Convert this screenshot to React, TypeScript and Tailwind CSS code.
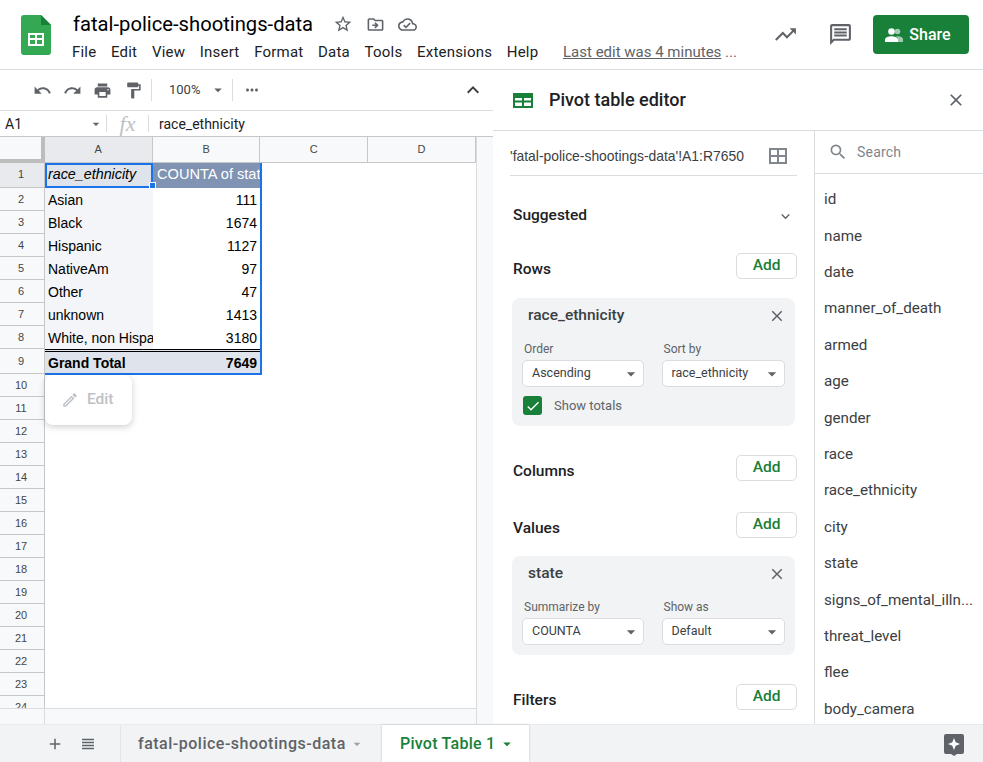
import { MdUndo, MdRedo, MdPrint, MdFormatPaint, MdMoreHoriz, MdKeyboardArrowUp, MdStarBorder, MdOutlineDriveFileMove, MdOutlineCloudDone, MdTrendingUp, MdOutlineMessage, MdClose, MdSearch, MdArrowDropDown, MdCheck, MdAdd, MdViewHeadline, MdKeyboardArrowDown, MdOutlineEdit } from "react-icons/md";

const sans = "font-['Roboto',sans-serif]";
const arial = "font-['Liberation_Sans',sans-serif]";

const menus = ["File", "Edit", "View", "Insert", "Format", "Data", "Tools", "Extensions", "Help"];
const rowNums = Array.from({ length: 24 }, (_, i) => i + 1);
const fields = ["id", "name", "date", "manner_of_death", "armed", "age", "gender", "race", "race_ethnicity", "city", "state", "signs_of_mental_illn...", "threat_level", "flee", "body_camera"];
const data = [
    ["Asian", "111"],
    ["Black", "1674"],
    ["Hispanic", "1127"],
    ["NativeAm", "97"],
    ["Other", "47"],
    ["unknown", "1413"],
    ["White, non Hispanic", "3180"],
];

function rowHeight(n: number) {
    if (n === 1) return "h-[25px] pb-[2px]";
    if (n === 9) return "h-[25px]";
    return "h-[23px]";
}

function SheetsLogo() {
    return (
        <svg width="30" height="40" viewBox="0 0 30 40">
            <path d="M3 0h17l10 10v27a3 3 0 0 1-3 3H3a3 3 0 0 1-3-3V3a3 3 0 0 1 3-3z" fill="#34a853" />
            <path d="M20 0l10 10H20z" fill="#188038" />
            <path d="M7 18h16v13H7z M9 20v3h5v-3z M16 20v3h5v-3z M9 25v4h5v-4z M16 25v4h5v-4z" fill="#fff" fillRule="evenodd" />
        </svg>
    );
}

function PivotIcon() {
    return (
        <svg width="20" height="15" viewBox="0 0 20 15">
            <path d="M0 0h20v15H0z M2 5v2.500h7V5z M11 5v2.500h7V5z M2 9.500V13h7V9.500z M11 9.500V13h7V9.500z" fill="#188038" fillRule="evenodd" />
        </svg>
    );
}

function RangeIcon() {
    return (
        <svg width="18" height="16" viewBox="0 0 18 16">
            <path d="M0 0h18v16H0z M2 2v5h6V2z M10 2v5h6V2z M2 9v5h6V9z M10 9v5h6V9z" fill="#80868b" fillRule="evenodd" />
        </svg>
    );
}

function ExploreIcon() {
    return (
        <svg width="20" height="22" viewBox="0 0 20 22">
            <path d="M2 0h16a2 2 0 0 1 2 2v16a2 2 0 0 1-2 2h-5l-3 2-3-2H2a2 2 0 0 1-2-2V2a2 2 0 0 1 2-2z" fill="#5f6368" />
            <path d="M10 4l1.700 4.300L16 10l-4.300 1.700L10 16l-1.700-4.300L4 10l4.300-1.700z" fill="#fff" />
        </svg>
    );
}

function ShareIcon() {
    return (
        <svg width="18" height="14" viewBox="0 0 18 14">
            <circle cx="12.500" cy="3.500" r="2.800" fill="#fff" fillOpacity="0.6" />
            <path d="M11 8.500c3-.6 7 .6 7 2.700V14h-5v-3c0-1-.7-1.900-2-2.500z" fill="#fff" fillOpacity="0.6" />
            <circle cx="6.500" cy="3.500" r="3.300" fill="#fff" />
            <path d="M0 11.500C0 9.300 4 8.300 6.500 8.300S13 9.300 13 11.500V14H0z" fill="#fff" />
        </svg>
    );
}

function AddRow({ label, className }: { label: string; className: string }) {
    return (
        <div className={`flex items-center justify-between h-[26px] pl-[20px] pr-[17px] ${className}`}>
            <span className={`${sans} pt-[7px] text-[15.5px] font-medium text-[#202124]`}>{label}</span>
            <button className={`${sans} w-[61px] h-[26px] rounded-[5px] border border-[#dadce0] bg-white text-[15.5px] font-medium text-[#188038]`}>Add</button>
        </div>
    );
}

function Select({ label, value, width }: { label: string; value: string; width: string }) {
    return (
        <div className={width}>
            <div className={`${sans} text-xs text-[#5f6368] pl-[2px] mb-[3px]`}>{label}</div>
            <div className="h-[27px] flex items-center justify-between rounded-[5px] border border-[#dadce0] bg-white pl-[9px] pr-[2px]">
                <span className={`${sans} text-[12.5px] text-[#3c4043]`}>{value}</span>
                <MdArrowDropDown className="text-[20px] text-[#5f6368]" />
            </div>
        </div>
    );
}

function FieldCard({ title, children, className }: { title: string; children: React.ReactNode; className: string }) {
    return (
        <div className={`mx-[19px] w-[283px] rounded-lg bg-[#f1f3f4] px-[10px] ${className}`}>
            <div className="flex items-center justify-between pl-[6px] h-[36px] mb-[7px]">
                <span className={`${sans} text-[15.5px] font-medium text-[#3c4043]`}>{title}</span>
                <MdClose className="text-[18px] text-[#5f6368] -mr-[1px]" />
            </div>
            {children}
        </div>
    );
}

function Grid() {
    return (
        <div className="relative flex-1 min-h-0 overflow-hidden flex flex-col">
            <div className={`${arial} flex h-[26px] shrink-0 border-b border-[#c7c7c7] text-[11px] text-[#444746]`}>
                <div className="w-[45px] -mb-px bg-[#f8f9fa] border-r-4 border-b-4 border-[#bdbdbd]"></div>
                <div className="w-[108px] bg-[#e8eaed] border-r border-[#c7c7c7] flex items-center justify-center">A</div>
                <div className="w-[108px] bg-[#f8f9fa] border-r border-[#c7c7c7] flex items-center justify-center">B</div>
                <div className="w-[108px] bg-[#f8f9fa] border-r border-[#c7c7c7] flex items-center justify-center">C</div>
                <div className="w-[108px] bg-[#f8f9fa] border-r border-[#c7c7c7] flex items-center justify-center">D</div>
            </div>
            <div className="flex flex-1 min-h-0">
                <div className="w-[45px] shrink-0 bg-[#f8f9fa] border-r border-[#c7c7c7]">
                    {rowNums.map((n) => (
                        <div key={n} className={`${arial} ${rowHeight(n)} ${n === 1 ? "bg-[#e8eaed]" : ""} pr-[2px] flex items-center justify-center border-b border-[#c7c7c7] text-[11px] text-[#444746]`}>{n}</div>
                    ))}
                </div>
                <div className={`${arial} w-[216px] shrink-0 text-sm text-black`}>
                    <div className="flex h-[25px]">
                        <div className="w-[108px] bg-[#dfe4ec] italic text-[14.3px] pl-[3px] pb-[3px] flex items-center">race_ethnicity</div>
                        <div className="w-[107px] bg-[#8093b3] text-white text-[14.6px] pl-[4px] pb-[3px] flex items-center overflow-hidden whitespace-nowrap">COUNTA of state</div>
                    </div>
                    {data.map(([name, value]) => (
                        <div key={name} className="flex h-[23px]">
                            <div className="w-[108px] bg-[#f3f5f8] pl-[3px] flex items-center overflow-hidden whitespace-nowrap">{name}</div>
                            <div className="w-[108px] pr-[4px] flex items-center justify-end">{value}</div>
                        </div>
                    ))}
                    <div className="flex h-[25px] font-bold bg-[#dfe4ec] border-t-[3px] border-double border-black">
                        <div className="w-[108px] pl-[3px] flex items-center">Grand Total</div>
                        <div className="w-[108px] pr-[4px] flex items-center justify-end">7649</div>
                    </div>
                </div>
                <div className="flex-1"></div>
            </div>
            {/* selection */}
            <div className="absolute left-[45px] top-[26px] w-[217px] h-[212px] border-r-2 border-b-2 border-[#1a73e8] pointer-events-none"></div>
            <div className="absolute left-[45px] top-[26px] w-[108px] h-[25px] border-2 border-[#1a73e8] pointer-events-none"></div>
            <div className="absolute left-[149px] top-[45px] w-[7px] h-[7px] bg-[#1a73e8] border border-white"></div>
            {/* edit chip */}
            <div className="absolute left-[45px] top-[238px] w-[87px] h-[50px] bg-white rounded-lg shadow-[0_2px_6px_rgba(60,64,67,0.25)] flex items-center pl-[16px] gap-[8px]">
                <MdOutlineEdit className="text-[18px] text-[#bdc1c6]" />
                <span className={`${sans} text-[15.5px] font-medium text-[#bdc1c6]`}>Edit</span>
            </div>
        </div>
    );
}

export default function App() {
    return (
        <div className={`${sans} w-[983px] h-[762px] overflow-hidden bg-white flex flex-col`}>
            <div className="h-[70px] shrink-0 border-b border-[#dadce0] flex relative">
                <div className="w-[72px] pl-[21px] pt-[15px]"><SheetsLogo /></div>
                <div className="flex-1 pt-[11px]">
                    <div className="flex items-center h-[26px]">
                        <span className="pl-[1px] text-[20.2px] text-black">fatal-police-shootings-data</span>
                        <MdStarBorder className="ml-[20px] text-[20px] text-[#5f6368]" />
                        <MdOutlineDriveFileMove className="ml-[13px] text-[19px] text-[#5f6368]" />
                        <MdOutlineCloudDone className="ml-[13px] text-[19px] text-[#5f6368]" />
                    </div>
                    <div className="flex items-center gap-[14.7px] mt-[3px] h-[24px] text-[15px] tracking-[0.2px] text-[#202124]">
                        {menus.map((m) => <span key={m}>{m}</span>)}
                        <span className="ml-[10px] tracking-normal text-[#5f6368]"><span className="underline">Last edit was 4 minutes</span> ...</span>
                    </div>
                </div>
                <div className="flex items-center">
                    <MdTrendingUp className="text-[25px] text-[#5f6368] mr-[30px]" />
                    <MdOutlineMessage className="text-[25px] text-[#5f6368] mr-[20px]" />
                    <button className="w-[96px] h-[39px] mr-[14px] pr-[6px] rounded-[4px] bg-[#188038] text-white text-base font-medium flex items-center justify-center gap-[6px]">
                        <ShareIcon />Share
                    </button>
                </div>
            </div>
            <div className="flex-1 min-h-0 flex">
                <div className="w-[493px] shrink-0 flex flex-col bg-white">
                    <div className="h-[41px] shrink-0 border-b border-[#dadce0] pr-[16px] flex items-center text-[#5f6368]">
                        <MdUndo className="ml-[33px] text-[19px]" />
                        <MdRedo className="ml-[11px] text-[19px]" />
                        <MdPrint className="ml-[11px] text-[19px]" />
                        <MdFormatPaint className="ml-[12px] text-[19px]" />
                        <div className="ml-[8px] w-px h-[22px] bg-[#dadce0]"></div>
                        <span className="ml-[17px] text-[13px] text-[#3c4043]">100%</span>
                        <MdArrowDropDown className="ml-[9px] text-[18px]" />
                        <div className="ml-[5px] w-px h-[22px] bg-[#dadce0]"></div>
                        <MdMoreHoriz className="ml-[10px] text-[18px]" />
                        <MdKeyboardArrowUp className="ml-auto mr-[-8px] text-[24px] text-[#3c4043]" />
                    </div>
                    <div className="h-[26px] shrink-0 border-b border-[#c7c7c7] pr-[16px] flex items-center">
                        <span className="w-[88px] pl-[5px] text-sm text-[#202124]">A1</span>
                        <MdArrowDropDown className="w-[16px] text-[18px] text-[#5f6368]" />
                        <div className="ml-[2px] w-px h-[17px] bg-[#dadce0]"></div>
                        <span className="w-[41px] text-center font-['Liberation_Serif',serif] italic text-[22px] leading-none text-[#bdc1c6]">fx</span>
                        <div className="w-px h-[17px] bg-[#dadce0]"></div>
                        <span className="ml-[10px] text-sm text-[#202124]">race_ethnicity</span>
                    </div>
                    <div className="flex-1 min-h-0 flex">
                        <div className="w-[477px] shrink-0 flex flex-col border-r border-[#dadce0]">
                            <Grid />
                            <div className="h-[16px] shrink-0 bg-[#f8f9fa] border-t border-[#dadce0] flex">
                                <div className="w-[45px] border-r border-[#dadce0]"></div>
                            </div>
                        </div>
                        <div className="flex-1 bg-[#f8f9fa]"></div>
                    </div>
                </div>
                <div className="flex-1 flex flex-col bg-white">
                    <div className="h-[61px] shrink-0 border-b border-[#dadce0] flex items-center pl-[20px] pr-[17px]">
                        <PivotIcon />
                        <span className="ml-[16px] text-lg font-medium text-[#202124]">Pivot table editor</span>
                        <MdClose className="ml-auto text-[20px] text-[#5f6368]" />
                    </div>
                    <div className="flex-1 min-h-0 flex">
                        <div className="w-[322px] shrink-0 border-r border-[#dadce0] overflow-hidden">
                            <div className="mx-[17px] h-[45px] border-b border-[#dadce0] flex items-center justify-between pr-[10px] pt-[6px]">
                                <span className={`${arial} text-[13.9px] text-[#3c4043]`}>'fatal-police-shootings-data'!A1:R7650</span>
                                <RangeIcon />
                            </div>
                            <div className="flex items-center justify-between pl-[20px] pr-[20px] mt-[28px] h-[24px]">
                                <span className="text-[15.5px] font-medium text-[#202124]">Suggested</span>
                                <MdKeyboardArrowDown className="text-[17px] text-[#5f6368]" />
                            </div>
                            <AddRow label="Rows" className="mt-[25px]" />
                            <FieldCard title="race_ethnicity" className="mt-[19px] h-[128px]">
                                <div className="flex gap-[18px]">
                                    <Select label="Order" value="Ascending" width="w-[122px]" />
                                    <Select label="Sort by" value="race_ethnicity" width="w-[124px]" />
                                </div>
                                <div className="flex items-center mt-[9px]">
                                    <span className="w-[19px] h-[19px] ml-[1px] rounded-[3px] bg-[#188038] flex items-center justify-center"><MdCheck className="text-white text-[16px]" /></span>
                                    <span className="ml-[12px] text-[13px] text-[#5f6368]">Show totals</span>
                                </div>
                            </FieldCard>
                            <AddRow label="Columns" className="mt-[29px]" />
                            <AddRow label="Values" className="mt-[31px]" />
                            <FieldCard title="state" className="mt-[18px] h-[99px]">
                                <div className="flex gap-[18px]">
                                    <Select label="Summarize by" value="COUNTA" width="w-[122px]" />
                                    <Select label="Show as" value="Default" width="w-[124px]" />
                                </div>
                            </FieldCard>
                            <AddRow label="Filters" className="mt-[29px]" />
                        </div>
                        <div className="flex-1 min-w-0 overflow-hidden">
                            <div className="h-[43px] border-b border-[#dadce0] flex items-center pl-[13px] gap-[9px] text-sm tracking-[0.2px] text-[#80868b]">
                                <MdSearch className="text-[20px]" />Search
                            </div>
                            <div className="pt-[7.5px]">
                                {fields.map((f) => (
                                    <div key={f} className="h-[36.4px] pl-[9px] flex items-center text-[15.2px] text-[#3c4043] whitespace-nowrap">{f}</div>
                                ))}
                            </div>
                        </div>
                    </div>
                </div>
            </div>
            <div className="h-[38px] shrink-0 bg-[#f1f3f4] border-t border-[#e8eaed] flex items-center">
                <MdAdd className="ml-[46px] text-[18px] text-[#5f6368]" />
                <MdViewHeadline className="ml-[15px] text-[18px] text-[#5f6368]" />
                <div className="ml-[23px] w-px h-full bg-[#e3e5e8]"></div>
                <div className="w-[261px] h-full flex items-center pl-[17px] text-base font-medium tracking-[0.5px] text-[#5f6368]">
                    fatal-police-shootings-data
                    <MdArrowDropDown className="ml-[3px] text-[16px] text-[#9aa0a6]" />
                </div>
                <div className="h-full w-[147px] bg-white shadow-[0_0_2px_rgba(60,64,67,0.3)] flex items-center pl-[18px] text-base font-medium tracking-[0.25px] text-[#188038]">
                    Pivot Table 1
                    <MdArrowDropDown className="ml-[3px] text-[18px]" />
                </div>
                <div className="ml-auto mr-[19px] pt-[2px]"><ExploreIcon /></div>
            </div>
        </div>
    );
}
